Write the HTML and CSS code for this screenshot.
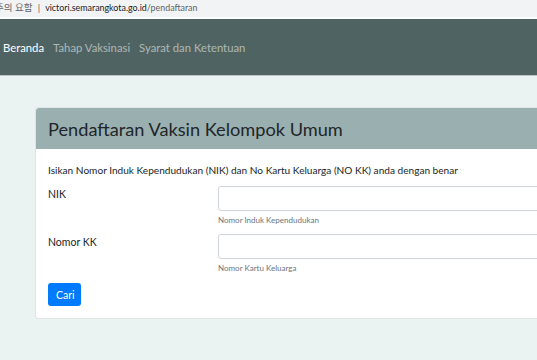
FILE: index.html
```html
<!DOCTYPE html>
<html lang="id">
<head>
    <meta charset="UTF-8">
    <meta name="viewport" content="width=device-width, initial-scale=1.0">
    <title>Pendaftaran</title>
    <link rel="stylesheet" href="styles.css">
</head>
<body>
    <!-- Address bar -->
    <div class="urlbar">
        <span class="warn">주의 요함</span>
        <span class="sep">|</span>
        <span class="host">victori.semarangkota.go.id</span><span class="path">/pendaftaran</span>
    </div>

    <!-- Navigation -->
    <nav class="navbar">
        <a class="nav-link active" href="#">Beranda</a>
        <a class="nav-link" href="#">Tahap Vaksinasi</a>
        <a class="nav-link" href="#">Syarat dan Ketentuan</a>
    </nav>

    <main class="content">
        <div class="card">
            <div class="card-header">
                <h1>Pendaftaran Vaksin Kelompok Umum</h1>
            </div>
            <div class="card-body">
                <p class="intro">Isikan Nomor Induk Kependudukan (NIK) dan No Kartu Keluarga (NO KK) anda dengan benar</p>

                <div class="form-row">
                    <label for="nik">NIK</label>
                    <div class="field">
                        <input id="nik" type="text">
                        <small>Nomor Induk Kependudukan</small>
                    </div>
                </div>

                <div class="form-row">
                    <label for="kk">Nomor KK</label>
                    <div class="field">
                        <input id="kk" type="text">
                        <small>Nomor Kartu Keluarga</small>
                    </div>
                </div>

                <button class="btn">Cari</button>
            </div>
        </div>
    </main>
</body>
</html>
```

FILE: styles.css
```css
body, html {
    margin: 0;
    padding: 0;
    width: 100%;
    height: 100%;
    overflow: hidden;
    font-family: 'Lato', 'Noto Sans CJK KR', sans-serif;
    background-color: #ebf2f2;
    color: #212529;
}

.urlbar {
    height: 17px;
    background-color: #f1f3f4;
    border-bottom: 2px solid #ffffff;
    font-size: 8.9px;
    line-height: 16px;
    color: #5f6368;
    white-space: nowrap;
    overflow: hidden;
}
.urlbar .warn {
    display: inline-block;
    margin-left: -5px;
    font-size: 9.5px;
}
.urlbar .sep {
    margin: 0 3px;
    font-size: 9.5px;
    color: #5f6368;
}
.urlbar .host {
    color: #202124;
}
.urlbar .path {
    color: #5f6368;
}

.navbar {
    height: 57px;
    background-color: #4f6462;
    display: flex;
    align-items: center;
    padding-left: 3px;
    gap: 9px;
    border-bottom: 1px solid #b8c4c4;
    box-sizing: border-box;
}
.nav-link {
    font-size: 11.3px;
    color: rgba(255, 255, 255, 0.55);
    text-decoration: none;
}
.nav-link.active {
    color: #ffffff;
}

.content {
    padding: 31px 0 0 35px;
}

.card {
    width: 560px;
    background-color: #ffffff;
    border: 1px solid #dfe5e5;
    border-radius: 3px;
}
.card-header {
    background-color: #9ab0b0;
    height: 41px;
    display: flex;
    align-items: center;
    padding-left: 12px;
    border-radius: 3px 3px 0 0;
}
.card-header h1 {
    margin: 0;
    font-size: 18.2px;
    font-weight: 400;
    color: #212529;
}
.card-body {
    padding: 15px 12px 12px 12px;
}
.intro {
    margin: 0 0 10px 0;
    font-size: 10.1px;
    color: #212529;
}
.form-row {
    display: flex;
    margin-bottom: 9px;
}
.form-row label {
    width: 170px;
    font-size: 10.5px;
    color: #212529;
    padding-top: 2px;
}
.field {
    flex: 1;
    display: flex;
    flex-direction: column;
}
.field input {
    height: 25px;
    box-sizing: border-box;
    border: 1px solid #ced4da;
    border-radius: 3px;
    width: 100%;
}
.field small {
    font-size: 8px;
    color: #6c757d;
    margin-top: 4px;
}
.btn {
    margin-top: 1px;
    background-color: #007bff;
    color: #ffffff;
    border: none;
    border-radius: 3px;
    font-family: inherit;
    font-size: 10.5px;
    padding: 3px 8px;
    height: 23px;
    width: 33px;
}
```
